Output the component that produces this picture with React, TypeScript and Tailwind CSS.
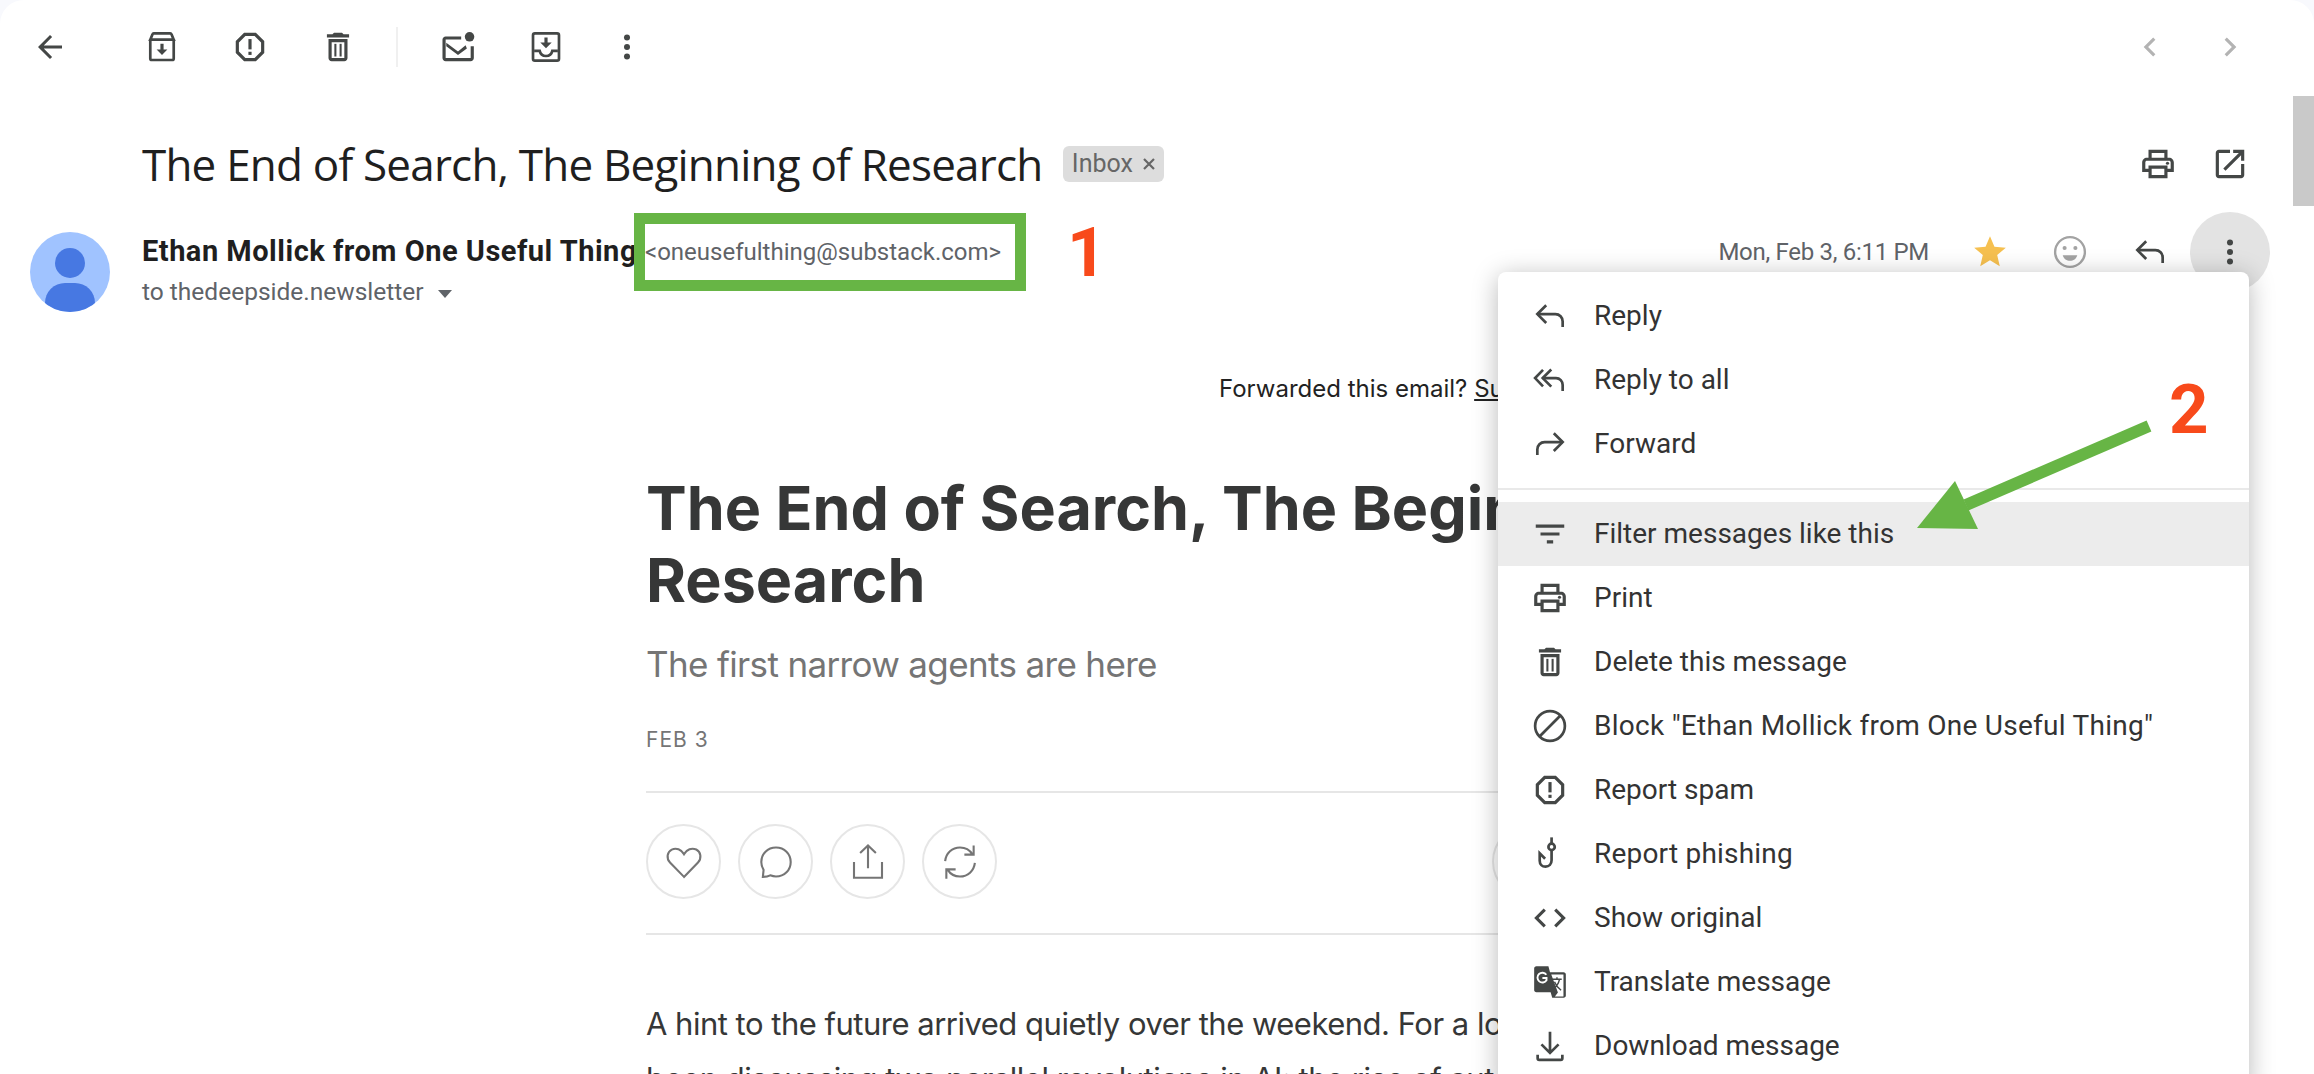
import React from "react";

const Ic = ({ children, size = 38, color = "#444746" }: { children: React.ReactNode; size?: number; color?: string }) => (
  <svg width={size} height={size} viewBox="0 0 24 24" fill={color} className="shrink-0">
    {children}
  </svg>
);
const S = { fill: "none", stroke: "currentColor", strokeWidth: 1.2 } as const;

const Back = () => <Ic size={36}><path d="M20 11H7.83l5.59-5.59L12 4l-8 8 8 8 1.41-1.41L7.83 13H20v-2z" /></Ic>;
const Archive = () => (
  <Ic><g fill="none" stroke="#444746" strokeWidth="1.7"><path d="M4.600 7v12.200c0 .6.4 1 1 1h12.800c.6 0 1-.4 1-1V7" /><path d="M4.600 7.400 6 3.900c.1-.3.4-.5.8-.5h10.400c.4 0 .7.2.8.5l1.400 3.500z" /></g><path d="M11 10h2v3.500h2.400L12 17l-3.400-3.500H11z" /></Ic>
);
const Spam = () => (
  <Ic><path d="M15.730 3H8.270L3 8.270v7.460L8.270 21h7.460L21 15.730V8.270L15.730 3zM19 14.900 14.900 19H9.100L5 14.900V9.100L9.100 5h5.800L19 9.100v5.800z" /><rect x="11" y="7" width="2" height="6.500" /><rect x="11" y="15" width="2" height="2" /></Ic>
);
const Trash = () => (
  <Ic><path d="M15.500 4l-1-1h-5l-1 1H5v2h14V4zM6 7v12c0 1.100.9 2 2 2h8c1.100 0 2-.9 2-2V7H6zm10 12H8V9h8v10z" /><rect x="9.700" y="10" width="1.300" height="8" /><rect x="13" y="10" width="1.300" height="8" /></Ic>
);
const MailDot = () => (
  <Ic><path d="M20 11.500V19H4.200V7.200H14V5.300H4.200c-1.100 0-2 .9-2 2V19c0 1.100.9 2 2 2H20c1.100 0 2-.9 2-2v-7.500h-2z" /><path d="M12 14.800 4.600 9.300v2.300l7.400 5.500 5.600-4.200-.8-2z" /><circle cx="19.300" cy="5.600" r="3" /></Ic>
);
const MoveTo = () => (
  <Ic><g fill="none" stroke="#444746" strokeWidth="1.700"><rect x="3.800" y="3.400" width="16.400" height="17.200" rx="1.200" /><path d="M4.500 14.400H8c.4 2 2 3.300 4 3.300s3.600-1.300 4-3.300h3.500" /></g><path d="M11 6h2v3.200h2.600L12 12.800 8.400 9.200H11z" /></Ic>
);
const More = () => (
  <Ic><circle cx="12" cy="6" r="1.900" /><circle cx="12" cy="12" r="1.900" /><circle cx="12" cy="18" r="1.900" /></Ic>
);
const Print = () => (
  <Ic><path d="M19 8h-1V3H6v5H5c-1.660 0-3 1.340-3 3v6h4v4h12v-4h4v-6c0-1.660-1.340-3-3-3zM8 5h8v3H8V5zm8 12v2H8v-4h8v2zm2-2v-2H6v2H4v-4c0-.55.45-1 1-1h14c.55 0 1 .45 1 1v4h-2z" /><circle cx="18" cy="11.500" r="1" /></Ic>
);
const OpenNew = () => (
  <Ic><path d="M19 19H5V5h7V3H5c-1.110 0-2 .9-2 2v14c0 1.100.89 2 2 2h14c1.100 0 2-.9 2-2v-7h-2v7zM14 3v2h3.590l-9.830 9.830 1.410 1.410L19 6.410V10h2V3h-7z" /></Ic>
);
const Reply = () => (
  <Ic><g fill="none" stroke="#444746" strokeWidth="1.700"><path d="M9.600 5.200 4 10.800l5.600 5.600" /><path d="M4 10.800h11.400c2.600 0 4.600 2 4.600 4.600v3.600" /></g></Ic>
);
const ReplyAll = () => (
  <Ic><g fill="none" stroke="#444746" strokeWidth="1.700"><path d="M7.600 5.600 2.600 10.800l5 5.200" /><path d="M12.800 5.400 7.400 10.800l5.400 5.400" /><path d="M7.400 10.800h8.400c2.400 0 4.200 2 4.200 4.400v3.800" /></g></Ic>
);
const Forward = () => (
  <Ic><g fill="none" stroke="#444746" strokeWidth="1.700"><path d="M14.400 5.200 20 10.800l-5.600 5.600" /><path d="M20 10.800H8.600C6 10.800 4 12.800 4 15.400v3.600" /></g></Ic>
);
const Filter = () => <Ic><path d="M10 18h4v-2h-4v2zM3 6v2h18V6H3zm3 7h12v-2H6v2z" /></Ic>;
const Block = () => (
  <Ic><g fill="none" stroke="#444746" strokeWidth="1.700"><circle cx="12" cy="12" r="9.400" /><path d="M5.400 18.600 18.600 5.400" /></g></Ic>
);
const Hook = () => (
  <Ic><g fill="none" stroke="#444746" strokeWidth="1.700"><path d="M13 1.500v4" /><circle cx="13" cy="7.500" r="2" /><path d="M13 9.500V16c0 2.400-1.600 4-3.800 4s-3.700-1.600-3.700-3.800v-4.600l3.400 3.400" /></g></Ic>
);
const Code = () => (
  <Ic><path d="M9.400 16.600 4.800 12l4.600-4.600L8 6l-6 6 6 6 1.400-1.400zm5.200 0 4.600-4.600-4.600-4.600L16 6l6 6-6 6-1.400-1.400z" /></Ic>
);
const Translate = () => (
  <Ic>
    <path d="M3.400 2H11l1 3.800h8.600c.8 0 1.400.6 1.400 1.400v13.400c0 .8-.6 1.400-1.400 1.400h-7.200l-1-3.600H3.400c-.8 0-1.400-.6-1.400-1.400V3.400C2 2.600 2.600 2 3.400 2z" />
    <path d="M12.800 7.300h7.700v13.900h-5.400l1.900-2.500z" fill="#fff" />
    <path d="M9.700 7.400A3.100 3.100 0 1 0 9.800 10.900V9.500H7.200" fill="none" stroke="#fff" strokeWidth="1.200" />
    <path d="M13.400 10.300h6M16.400 9v1.300M18 10.300c-.6 2.800-2.300 5-4.200 6M14.800 11.800c.8 2.200 2.600 4.100 4.200 5.400" fill="none" stroke="#444746" strokeWidth="0.900" />
  </Ic>
);
const Download = () => (
  <Ic><path d="M4.200 17.500v2.300c0 .5.4 1 1 1h13.600c.6 0 1-.5 1-1v-2.300" fill="none" stroke="#444746" strokeWidth="1.700" /><path d="M12 3v13M6.600 11l5.400 5.400 5.400-5.400" fill="none" stroke="#444746" strokeWidth="1.700" /></Ic>
);
const Star = () => (
  <Ic color="#f6c050"><path d="M12 17.270 18.180 21l-1.640-7.030L22 9.240l-7.190-.61L12 2 9.190 8.630 2 9.240l5.460 4.730L5.820 21z" /></Ic>
);
const Smile = () => (
  <Ic color="#a3a3a3"><circle cx="12" cy="12" r="9.400" fill="none" stroke="#a3a3a3" strokeWidth="1.500" /><circle cx="8.600" cy="9.500" r="1.300" /><circle cx="15.400" cy="9.500" r="1.300" /><path d="M7.400 14h9.200c-.7 2.300-2.500 3.600-4.600 3.600S8.100 16.300 7.400 14z" /></Ic>
);
const ChevL = () => <Ic color="#b3b3b3"><path d="M15.400 7.400 14 6l-6 6 6 6 1.400-1.400L10.800 12z" /></Ic>;
const ChevR = () => <Ic color="#b3b3b3"><path d="M8.600 7.400 10 6l6 6-6 6-1.400-1.400L13.200 12z" /></Ic>;

const Round = ({ children, className = "" }: { children?: React.ReactNode; className?: string }) => (
  <div className={`w-[75px] h-[75px] rounded-full border-2 border-[#e6e6e6] flex items-center justify-center shrink-0 text-[#757575] ${className}`}>
    {children}
  </div>
);

const menu1 = [
  { t: "Reply", i: <Reply /> },
  { t: "Reply to all", i: <ReplyAll /> },
  { t: "Forward", i: <Forward /> },
];
const menu2 = [
  { t: "Filter messages like this", i: <Filter />, on: true },
  { t: "Print", i: <Print /> },
  { t: "Delete this message", i: <Trash /> },
  { t: 'Block "Ethan Mollick from One Useful Thing"', i: <Block />, cls: "tracking-[0.27px]" },
  { t: "Report spam", i: <Spam /> },
  { t: "Report phishing", i: <Hook />, cls: "tracking-[0.2px]" },
  { t: "Show original", i: <Code /> },
  { t: "Translate message", i: <Translate /> },
  { t: "Download message", i: <Download /> },
];

const Row = ({ t, i, on, cls = "" }: { t: string; i: React.ReactNode; on?: boolean; cls?: string }) => (
  <div className={`h-[64px] flex items-center shrink-0 ${on ? "bg-[#ececec]" : ""}`}>
    <div className="w-[38px] ml-[33px] flex justify-center">{i}</div>
    <span className={`ml-[25px] text-[28px] text-[#333333] whitespace-nowrap ${cls}`}>{t}</span>
  </div>
);

export default function App() {
  return (
    <div className="relative w-[2314px] h-[1074px] overflow-hidden bg-[#f8f9fd] font-['Roboto',sans-serif]">
      <div className="w-full h-full bg-white rounded-t-[24px] overflow-hidden">
        {/* toolbar */}
        <div className="h-[94px] flex items-center pr-[44px]">
          <div className="w-[88px] ml-[6px] flex justify-center"><Back /></div>
          <div className="w-[88px] ml-[24px] flex justify-center"><Archive /></div>
          <div className="w-[88px] flex justify-center"><Spam /></div>
          <div className="w-[88px] flex justify-center"><Trash /></div>
          <div className="w-[2px] h-[40px] ml-[14px] bg-[#f0f0f0]" />
          <div className="w-[88px] ml-[16px] flex justify-center"><MailDot /></div>
          <div className="w-[88px] flex justify-center"><MoveTo /></div>
          <div className="w-[74px] flex justify-center"><More /></div>
          <div className="w-[80px] ml-auto flex justify-center"><ChevL /></div>
          <div className="w-[80px] flex justify-center"><ChevR /></div>
        </div>

        {/* subject */}
        <div className="mt-[30px] h-[80px] flex items-center pl-[142px] pr-[44px]">
          <h1 className="text-[44px] font-normal text-[#1f1f1f] tracking-[-0.8px] whitespace-nowrap font-['Open_Sans',sans-serif]">The End of Search, The Beginning of Research</h1>
          <div className="ml-[21px] w-[101px] h-[36px] rounded-[6px] bg-[#dddddd] flex items-center justify-center gap-[9px] text-[25px] text-[#666666]">
            <span>Inbox</span>
            <svg width="14" height="14" viewBox="0 0 14 14" stroke="#666666" strokeWidth="2.200"><path d="M2 2l10 10M12 2 2 12" /></svg>
          </div>
          <div className="w-[64px] ml-auto flex justify-center"><Print /></div>
          <div className="w-[80px] flex justify-center"><OpenNew /></div>
        </div>

        {/* sender */}
        <div className="mt-[8px] flex pr-[44px] h-[100px] items-start">
          <div className="ml-[30px] mt-[20px] w-[80px] h-[80px] rounded-full bg-[#a0c3ff] relative overflow-hidden shrink-0">
            <div className="absolute left-[25px] top-[16px] w-[30px] h-[30px] rounded-full bg-[#4778e2]" />
            <div className="absolute left-[15px] top-[51px] w-[50px] h-[40px] rounded-full bg-[#4778e2]" />
          </div>
          <div className="ml-[32px] mt-[20px]">
            <div className="h-[40px] flex items-center whitespace-nowrap">
              <span className="text-[29px] tracking-[0.5px] font-bold text-[#1f1f1f]">Ethan Mollick from One Useful Thing</span>
              <span className="ml-[8px] text-[24px] text-[#5f6368]">&lt;oneusefulthing@substack.com&gt;</span>
            </div>
            <div className="h-[41px] flex items-center text-[24.5px] text-[#5f6368] whitespace-nowrap">
              to thedeepside.newsletter
              <svg className="ml-[14px] mt-[2px]" width="14" height="8" viewBox="0 0 14 8" fill="#5f6368"><path d="M0 0h14L7 8z" /></svg>
            </div>
          </div>
          <div className="ml-auto flex items-center h-[80px]">
            <span className="text-[24px] tracking-[-0.3px] text-[#5f6368] whitespace-nowrap">Mon, Feb 3, 6:11 PM</span>
            <div className="w-[60px] ml-[31px] flex justify-center"><Star /></div>
            <div className="w-[60px] ml-[20px] flex justify-center"><Smile /></div>
            <div className="w-[60px] ml-[20px] flex justify-center"><Reply /></div>
            <div className="w-[80px] h-[80px] ml-[10px] rounded-full bg-[#e3e3e3] flex items-center justify-center"><More /></div>
          </div>
        </div>

        {/* message */}
        <div className="font-['Inter',sans-serif] text-[#363737]">
          <div className="mt-[61px] ml-[1219px] h-[32px] flex items-center text-[24px] text-[#222222] whitespace-nowrap">
            Forwarded this email?&nbsp;<span className="underline">Subscribe here</span>&nbsp;for more
          </div>
          <div className="ml-[646px] w-[1100px]">
            <h2 className="mt-[67px] text-[61px] leading-[72px] font-bold">The End of Search, The Beginning of Research</h2>
            <p className="mt-[24px] text-[35px] leading-[48px] text-[#757575] tracking-[-0.65px] whitespace-nowrap">The first narrow agents are here</p>
            <p className="mt-[37px] text-[21px] leading-[30px] text-[#757575] tracking-[1px]">FEB 3</p>
            <div className="mt-[36px] h-[2px] bg-[#e6e6e6]" />
            <div className="mt-[31px] flex gap-[17px] h-[75px]">
              <Round><svg width="42" height="42" viewBox="0 0 24 24" {...S}><path d="M12 20.500 4 12.300C1.800 10 2.300 6.200 5 4.900c2.600-1.200 5.400-.1 7 2.600 1.600-2.700 4.400-3.800 7-2.600 2.700 1.300 3.200 5.100 1 7.400z" /></svg></Round>
              <Round><svg width="42" height="42" viewBox="0 0 24 24" {...S}><path d="M4.500 20.500c1.500 0 3-.2 4.200-.9 1 .4 2.100.7 3.300.7 4.800 0 8.400-3.600 8.400-8.300S16.800 3.700 12 3.700 3.600 7.300 3.600 12c0 1.700.5 3.200 1.300 4.500z" /></svg></Round>
              <Round><svg width="42" height="42" viewBox="0 0 24 24" {...S}><path d="M12 15.500V2.500M7.500 6.800 12 2.500l4.500 4.300M4 12v9h16v-9" /></svg></Round>
              <Round><svg width="42" height="42" viewBox="0 0 24 24" {...S}><path d="M3.500 11.500C4 7 7.500 3.700 12 3.700c3 0 5.600 1.500 7 3.800M20.500 12.500c-.5 4.500-4 7.800-8.500 7.800-3 0-5.600-1.500-7-3.800M19.800 2.500v5.300h-5.300M4.200 21.500v-5.300h5.300" /></svg></Round>
              <Round className="ml-[478px]" />
            </div>
            <div className="mt-[34px] h-[2px] bg-[#e6e6e6]" />
          </div>
          <div className="ml-[646px] w-[1200px] mt-[61px] text-[31px] leading-[55px] tracking-[-0.5px] whitespace-nowrap">
            <p>A hint to the future arrived quietly over the weekend. For a long time, I've</p>
            <p>been discussing two parallel revolutions in AI: the rise of autonomous agents</p>
          </div>
        </div>
      </div>

      {/* scrollbar */}
      <div className="absolute left-[2293px] top-[96px] w-[21px] h-[110px] bg-[#c9c9c9]" />

      {/* dropdown menu */}
      <div className="absolute left-[1498px] top-[272px] w-[751px] h-[820px] bg-white rounded-[8px] shadow-[0_4px_26px_rgba(0,0,0,0.28)] pt-[12px] flex flex-col">
        {menu1.map((m) => <Row key={m.t} {...m} />)}
        <div className="h-[2px] mt-[12px] mb-[12px] bg-[#e9e9e9] shrink-0" />
        {menu2.map((m) => <Row key={m.t} {...m} />)}
      </div>

      {/* annotations */}
      <div className="absolute left-[634px] top-[213px] w-[392px] h-[78px] border-[11px] border-[#67b545]" />
      <span className="absolute left-[1067px] top-[214px] text-[69px] leading-[78px] font-bold text-[#f84a1b]">1</span>
      <span className="absolute left-[2169px] top-[371px] text-[69px] leading-[78px] font-bold text-[#f84a1b]">2</span>
      <svg className="absolute left-[1900px] top-[400px]" width="270" height="140" viewBox="0 0 270 140">
        <path d="M66 105 249 26" stroke="#67b545" strokeWidth="12" fill="none" />
        <path d="M17 128 55 81 78 129z" fill="#67b545" />
      </svg>
    </div>
  );
}
